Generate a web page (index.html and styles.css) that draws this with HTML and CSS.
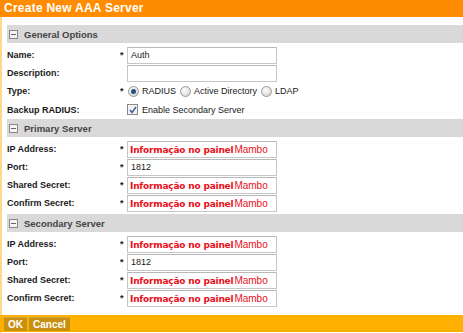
FILE: index.html
```html
<!DOCTYPE html>
<html lang="en">
<head>
  <meta charset="UTF-8" />
  <title>Create New AAA Server</title>
  <link rel="stylesheet" href="styles.css">
</head>
<body>

<div class="dialog">
  <div class="title">Create New AAA Server</div>

  <div class="content">
    <!-- General -->
    <div class="section-head"><span class="toggle"></span>General Options</div>
    <div class="row">
      <label>Name:</label><span class="req">*</span>
      <div class="field">Auth</div>
    </div>
    <div class="row">
      <label>Description:</label><span class="req"></span>
      <div class="field"></div>
    </div>
    <div class="row">
      <label>Type:</label><span class="req">*</span>
      <div class="choices">
        <span class="radio on"></span>RADIUS
        <span class="radio"></span>Active Directory
        <span class="radio"></span>LDAP
      </div>
    </div>
    <div class="row tall">
      <label>Backup RADIUS:</label><span class="req"></span>
      <div class="choices">
        <span class="check">
          <svg width="8" height="8" viewBox="0 0 8 8"><path d="M1 4 L3 6.5 L7 1" fill="none" stroke="#3b5ba0" stroke-width="1.4"/></svg>
        </span>Enable Secondary Server
      </div>
    </div>

    <!-- Primary -->
    <div class="section-head"><span class="toggle"></span>Primary Server</div>
    <div class="group">
      <div class="row">
        <label>IP Address:</label><span class="req">*</span>
        <div class="field mark"><span class="m1">Informação no painel</span><span class="m2">Mambo</span></div>
      </div>
      <div class="row">
        <label>Port:</label><span class="req">*</span>
        <div class="field">1812</div>
      </div>
      <div class="row">
        <label>Shared Secret:</label><span class="req">*</span>
        <div class="field mark"><span class="m1">Informação no painel</span><span class="m2">Mambo</span></div>
      </div>
      <div class="row">
        <label>Confirm Secret:</label><span class="req">*</span>
        <div class="field mark"><span class="m1">Informação no painel</span><span class="m2">Mambo</span></div>
      </div>
    </div>

    <!-- Secondary -->
    <div class="section-head"><span class="toggle"></span>Secondary Server</div>
    <div class="group">
      <div class="row">
        <label>IP Address:</label><span class="req">*</span>
        <div class="field mark"><span class="m1">Informação no painel</span><span class="m2">Mambo</span></div>
      </div>
      <div class="row">
        <label>Port:</label><span class="req">*</span>
        <div class="field">1812</div>
      </div>
      <div class="row">
        <label>Shared Secret:</label><span class="req">*</span>
        <div class="field mark"><span class="m1">Informação no painel</span><span class="m2">Mambo</span></div>
      </div>
      <div class="row">
        <label>Confirm Secret:</label><span class="req">*</span>
        <div class="field mark"><span class="m1">Informação no painel</span><span class="m2">Mambo</span></div>
      </div>
    </div>
  </div>

  <div class="buttons">
    <button>OK</button><button>Cancel</button>
  </div>
</div>

</body>
</html>
```

FILE: styles.css
```css
body {
  margin: 0;
  font-family: "Liberation Sans", Arial, sans-serif;
  font-size: 9px;
  color: #1a1a1a;
  background: #fff;
}

.dialog {
  width: 461px;
  height: 333px;
  border-left: 2px solid #ffd98a;
  display: flex;
  flex-direction: column;
}

.title {
  height: 17px;
  line-height: 17px;
  margin-left: -2px;
  padding-left: 4px;
  background: #ff8c00;
  color: #fff;
  font-weight: bold;
  font-size: 12px;
  letter-spacing: 0.25px;
}

.content {
  flex: 1;
  padding: 8px 0 0 5px;
}

.section-head {
  height: 18px;
  display: flex;
  align-items: center;
  background: #d9d9d9;
  color: #444;
  font-weight: bold;
  font-size: 9.5px;
  padding-left: 2px;
}

.toggle {
  width: 7px;
  height: 7px;
  border: 1px solid #888;
  background: #f4f4f4;
  margin-right: 6px;
  position: relative;
}

.toggle::after {
  content: "";
  position: absolute;
  left: 1px;
  right: 1px;
  top: 3px;
  height: 1px;
  background: #666;
}

.row {
  display: flex;
  align-items: center;
  height: 18px;
}

.row.tall { height: 19px; }

.section-head + .row { margin-top: 3px; }
.group { margin-top: 3px; margin-bottom: 2px; }

.row label {
  width: 113px;
  font-weight: bold;
}

.req {
  width: 7px;
  font-weight: bold;
}

.field {
  box-sizing: border-box;
  width: 150px;
  height: 17px;
  line-height: 15px;
  border: 1px solid #c6c6c6;
  border-top-color: #b8b8b8;
  padding-left: 3px;
  background: #fff;
  white-space: nowrap;
  overflow: hidden;
}

.field.mark {
  color: #e8101a;
  padding-left: 2px;
}

.m1 {
  font-family: "DejaVu Sans", sans-serif;
  font-size: 9px;
  font-weight: bold;
  letter-spacing: -0.2px;
}

.m2 {
  font-size: 10px;
  margin-left: 1px;
}

.choices {
  display: flex;
  align-items: center;
  gap: 3px;
}

.radio {
  width: 9px;
  height: 9px;
  border-radius: 50%;
  border: 1px solid #9a9a9a;
  background: radial-gradient(circle at 40% 35%, #fff, #ccc);
  margin-left: 1px;
  position: relative;
}

.radio.on::after {
  content: "";
  position: absolute;
  left: 2px;
  top: 2px;
  width: 5px;
  height: 5px;
  border-radius: 50%;
  background: #2a4f80;
}

.check {
  width: 9px;
  height: 9px;
  border: 1px solid #8a8a8a;
  background: #f2f2f2;
  display: flex;
  align-items: center;
  justify-content: center;
  margin-right: 1px;
}

.buttons {
  height: 17px;
  margin-left: -2px;
  margin-bottom: 1px;
  background: #ffb000;
  display: flex;
  align-items: center;
  gap: 2px;
  padding-left: 4px;
}

.buttons button {
  height: 14px;
  padding: 0 4px;
  border: none;
  border-top: 1px solid #d9a43a;
  background: #c89010;
  color: #fff;
  font-family: "Liberation Sans", Arial, sans-serif;
  font-weight: bold;
  font-size: 10px;
  line-height: 13px;
}
```
